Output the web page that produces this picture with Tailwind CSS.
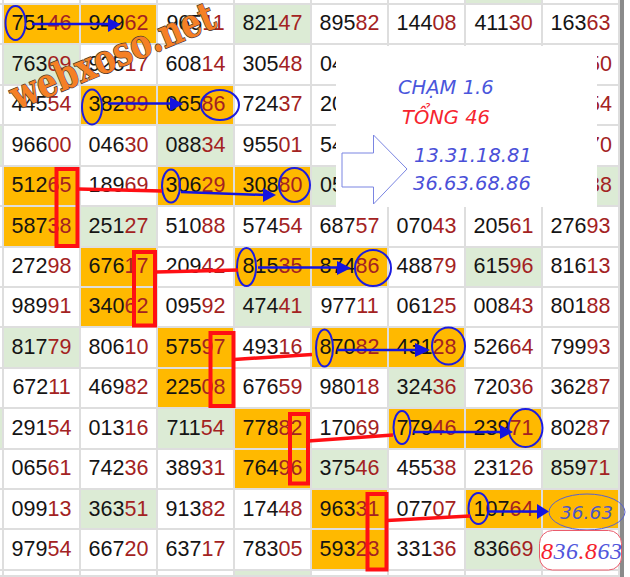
<!DOCTYPE html>
<html>
<head>
<meta charset="utf-8">
<script src="https://cdn.jsdelivr.net/npm/@tailwindcss/browser@4"></script>
</head>
<body class="bg-white">
<div class="relative w-[630px] h-[577px] overflow-hidden flex bg-white font-['Liberation_Sans',sans-serif]">
  <div class="w-[620px] h-[577px] grid grid-cols-[4px_repeat(8,77px)] grid-rows-[5px_repeat(14,40.43px)_6px] text-[21.5px] leading-none text-[#141414] [&>div]:flex [&>div]:items-center [&>div]:justify-center [&>div]:border-r-2 [&>div]:border-b-2 [&>div]:border-[#dedede] [&_b]:font-normal [&_b]:text-[#a32222]">
    <div></div><div></div><div></div><div></div><div></div><div></div><div></div><div class="bg-[#dcebd5]"></div><div></div>

    <div></div><div class="bg-[#ffb900]">751<b>46</b></div><div class="bg-[#ffb900]">949<b>62</b></div><div>965<b>11</b></div><div class="bg-[#dcebd5]">821<b>47</b></div><div>895<b>82</b></div><div>144<b>08</b></div><div>411<b>30</b></div><div>163<b>63</b></div>

    <div></div><div class="bg-[#dcebd5]">763<b>09</b></div><div>925<b>17</b></div><div>608<b>14</b></div><div>305<b>48</b></div><div class="!justify-start pl-2">04</div><div></div><div></div><div class="!justify-end pr-[6px]"><b>50</b></div>

    <div></div><div>445<b>54</b></div><div class="bg-[#ffb900]">382<b>89</b></div><div class="bg-[#ffb900]">065<b>86</b></div><div>724<b>37</b></div><div class="!justify-start pl-2">20</div><div></div><div></div><div class="!justify-end pr-[6px]"><b>54</b></div>

    <div class="bg-[#dcebd5]"></div><div>966<b>00</b></div><div>046<b>30</b></div><div class="bg-[#dcebd5]">088<b>34</b></div><div>955<b>01</b></div><div class="!justify-start pl-2">54</div><div></div><div></div><div class="!justify-end pr-[6px]"><b>70</b></div>

    <div></div><div class="bg-[#ffb900]">512<b>65</b></div><div>189<b>69</b></div><div class="bg-[#ffb900]">306<b>29</b></div><div class="bg-[#ffb900]">308<b>80</b></div><div class="bg-[#dcebd5] !justify-start pl-2">05</div><div></div><div></div><div class="bg-[#dcebd5] !justify-end pr-[6px]"><b>38</b></div>

    <div></div><div class="bg-[#ffb900]">587<b>38</b></div><div class="bg-[#dcebd5]">251<b>27</b></div><div>510<b>88</b></div><div>574<b>54</b></div><div>687<b>57</b></div><div>070<b>43</b></div><div>205<b>61</b></div><div>276<b>93</b></div>

    <div></div><div>272<b>98</b></div><div class="bg-[#ffb900]">676<b>17</b></div><div>209<b>42</b></div><div class="bg-[#ffb900]">815<b>35</b></div><div class="bg-[#ffb900]">874<b>86</b></div><div>488<b>79</b></div><div class="bg-[#dcebd5]">615<b>96</b></div><div>816<b>13</b></div>

    <div></div><div>989<b>91</b></div><div class="bg-[#ffb900]">340<b>62</b></div><div>095<b>92</b></div><div class="bg-[#dcebd5]">474<b>41</b></div><div>977<b>11</b></div><div>061<b>25</b></div><div>008<b>43</b></div><div>801<b>88</b></div>

    <div></div><div class="bg-[#dcebd5]">817<b>79</b></div><div>806<b>10</b></div><div class="bg-[#ffb900]">575<b>97</b></div><div>493<b>16</b></div><div class="bg-[#ffb900]">870<b>82</b></div><div class="bg-[#ffb900]">431<b>28</b></div><div>526<b>64</b></div><div>799<b>93</b></div>

    <div></div><div>672<b>11</b></div><div>469<b>82</b></div><div class="bg-[#ffb900]">225<b>08</b></div><div>676<b>59</b></div><div>980<b>18</b></div><div class="bg-[#dcebd5]">324<b>36</b></div><div>720<b>36</b></div><div>362<b>87</b></div>

    <div class="bg-[#dcebd5]"></div><div>291<b>54</b></div><div>013<b>16</b></div><div class="bg-[#dcebd5]">711<b>54</b></div><div class="bg-[#ffb900]">778<b>82</b></div><div>170<b>69</b></div><div class="bg-[#ffb900]">779<b>46</b></div><div class="bg-[#ffb900]">239<b>71</b></div><div>802<b>87</b></div>

    <div></div><div>065<b>61</b></div><div>742<b>36</b></div><div>389<b>31</b></div><div class="bg-[#ffb900]">764<b>96</b></div><div class="bg-[#dcebd5]">375<b>46</b></div><div>455<b>38</b></div><div>231<b>26</b></div><div class="bg-[#dcebd5]">859<b>71</b></div>

    <div></div><div>099<b>13</b></div><div class="bg-[#dcebd5]">363<b>51</b></div><div>913<b>82</b></div><div>174<b>48</b></div><div class="bg-[#ffb900]">963<b>31</b></div><div>077<b>07</b></div><div class="bg-[#ffb900]">107<b>64</b></div><div class="bg-[#ffb900]"></div>

    <div></div><div>979<b>54</b></div><div>667<b>20</b></div><div>637<b>17</b></div><div>783<b>05</b></div><div class="bg-[#ffb900]">593<b>23</b></div><div>331<b>36</b></div><div class="bg-[#dcebd5]">836<b>69</b></div><div></div>

    <div></div><div></div><div></div><div></div><div class="bg-[#dcebd5]"></div><div></div><div></div><div></div><div></div>
  </div>
  <div class="w-1 h-full bg-[#8a8a8a] shrink-0"></div>

  <!-- white note panel over the table -->
  <div class="absolute left-[336px] top-[46px] w-[261px] h-[161px] bg-white"></div>

  <!-- hand-drawn annotations over the table -->
  <svg class="absolute inset-0" width="630" height="577" viewBox="0 0 630 577" fill="none">
    <g stroke="#1c1ce0" stroke-width="2">
      <ellipse cx="15.5" cy="23" rx="10" ry="17"/>
      <ellipse cx="92" cy="107" rx="10" ry="17.5"/>
      <ellipse cx="220" cy="105" rx="19" ry="15"/>
      <ellipse cx="171" cy="186" rx="9" ry="16.5"/>
      <ellipse cx="294.5" cy="185" rx="15.5" ry="17"/>
      <ellipse cx="246.5" cy="267" rx="9.5" ry="19"/>
      <ellipse cx="373" cy="268" rx="18" ry="18"/>
      <ellipse cx="324.5" cy="348" rx="8.5" ry="18.5"/>
      <ellipse cx="448.5" cy="346" rx="16.5" ry="18.5"/>
      <ellipse cx="402" cy="427.5" rx="8.5" ry="16.5"/>
      <ellipse cx="525.5" cy="428" rx="17" ry="19"/>
      <ellipse cx="478.5" cy="508.5" rx="10" ry="15.5"/>
    </g>
    <g stroke="#1414e0" stroke-width="2.5">
      <path d="M32 24H110"/>
      <path d="M108 103.5H172"/>
      <path d="M181 192L266 195"/>
      <path d="M258 267.5H340"/>
      <path d="M337 350H418"/>
      <path d="M413 432H502"/>
      <path d="M487 511.5H540"/>
    </g>
    <g fill="#1414e0">
      <path d="M108 18L121 24.500L108 32Z"/>
      <path d="M170 97L183 104L170 111Z"/>
      <path d="M263 188L276 195L263 202Z"/>
      <path d="M337 261L351 268L337 275Z"/>
      <path d="M415 343L430 350L415 357Z"/>
      <path d="M500 425L513 432L500 439Z"/>
      <path d="M537 504L549 511.500L537 519Z"/>
    </g>
    <g stroke="#ff0f14" stroke-width="4">
      <rect x="56.500" y="169" width="21" height="77"/>
      <rect x="134" y="252" width="21" height="73.500"/>
      <rect x="210.500" y="333" width="23" height="73"/>
      <rect x="290" y="414" width="18" height="69.500"/>
      <rect x="367.500" y="494" width="19" height="75.500"/>
    </g>
    <g stroke="#ff0f14" stroke-width="3.5">
      <path d="M78 189L162 191"/>
      <path d="M156 272L238 270"/>
      <path d="M234 359.500L312 354.500"/>
      <path d="M308 441L393 435"/>
      <path d="M387 520.500L470 516"/>
    </g>
    <path d="M342 153H373.500V135L407 169L373.500 204V187H342Z" fill="#fff" stroke="#7a85e2" stroke-width="1"/>
    <text x="398" y="94" font-family="'DejaVu Sans',sans-serif" font-style="italic" font-size="19.500" fill="#4a56dc">CHẠM 1.6</text>
    <text x="402" y="124" font-family="'DejaVu Sans',sans-serif" font-style="italic" font-size="19.500" fill="#f6242e">TỔNG 46</text>
    <text x="414" y="162" font-family="'DejaVu Sans',sans-serif" font-style="italic" font-size="19.500" fill="#4a50d8">13.31.18.81</text>
    <text x="413" y="190" font-family="'DejaVu Sans',sans-serif" font-style="italic" font-size="19.500" fill="#4a50d8">36.63.68.86</text>

    <ellipse cx="587" cy="512" rx="38" ry="18" stroke="#5a62cc" stroke-width="1"/>
    <text x="560" y="519" font-family="'DejaVu Sans',sans-serif" font-style="italic" font-size="18.500" fill="#4d55c8">36.63</text>
    <rect x="539.500" y="530.500" width="82" height="39.500" rx="13" fill="#fff" stroke="#ea5c6c" stroke-width="1"/>
    <text x="541" y="559" font-family="'Liberation Serif',serif" font-style="italic" font-size="24" letter-spacing="0.500" fill="#5056dc"><tspan fill="#f5202c">8</tspan>36<tspan fill="#f5202c">.8</tspan>63</text>

    <g transform="translate(17 110) rotate(-22.500)">
      <text font-family="'DejaVu Serif',serif" font-weight="700" font-size="40" textLength="218" lengthAdjust="spacingAndGlyphs" fill="#f58025" stroke="#4a3a30" stroke-width="1.500" paint-order="stroke">webxoso.net</text>
    </g>
  </svg>
</div>
</body>
</html>
